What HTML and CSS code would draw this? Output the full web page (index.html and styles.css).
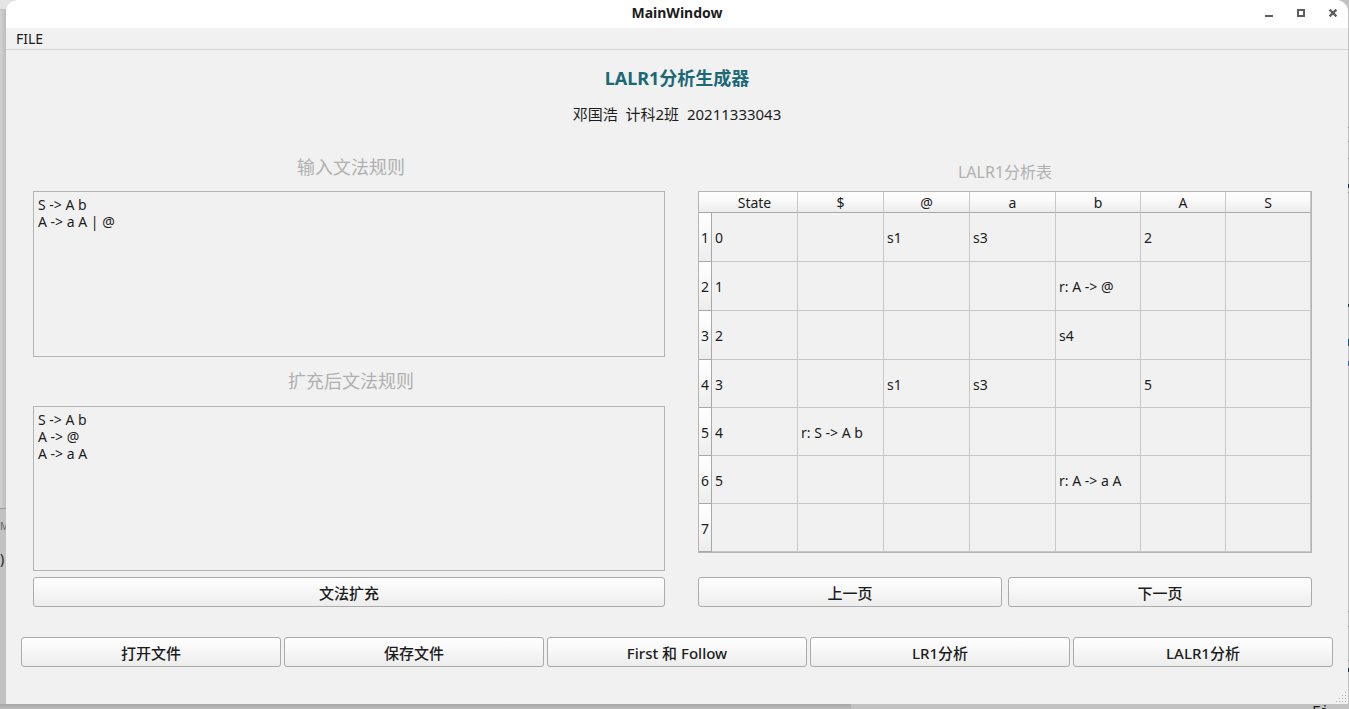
FILE: index.html
```html
<!DOCTYPE html>
<html lang="zh-CN">
<head>
<meta charset="utf-8">
<title>MainWindow</title>
<link rel="stylesheet" href="styles.css">
</head>
<body>
<div class="backdrop" aria-hidden="true">
  <div class="strip strip-left-top"></div>
  <div class="strip strip-left"></div>
  <div class="strip strip-bottom"></div>
  <span class="peek peek-m">M</span>
  <span class="peek peek-paren">)</span>
  <span class="peek peek-fi">Fi</span>
  <svg class="edge" width="1" height="709" viewBox="0 0 1 709" shape-rendering="crispEdges">
    <path d="M0 184h1v4h-1zM0 304h1v3h-1zM0 668h1v4h-1z" fill="#2b3140"/>
    <path d="M0 339h1v7h-1z" fill="#14586a"/>
    <path d="M0 361h1v5h-1z" fill="#3a66a5"/>
    <path d="M0 127h1v1h-1zM0 141h1v1h-1zM0 158h1v1h-1zM0 192h1v1h-1zM0 611h1v1h-1zM0 626h1v1h-1zM0 660h1v1h-1z" fill="#858585"/>
  </svg>
</div>
<div class="window">
  <header class="titlebar">
    <h1 class="window-title">MainWindow</h1>
    <div class="window-controls">
      <button class="window-button" aria-label="Minimize"><svg width="10" height="10" viewBox="0 0 10 10" shape-rendering="crispEdges"><path d="M1 7h8v2H1z" fill="#5e5e5e"/></svg></button>
      <button class="window-button" aria-label="Maximize"><svg width="10" height="10" viewBox="0 0 10 10" shape-rendering="crispEdges"><path d="M2 2h6v6H2z" fill="none" stroke="#5e5e5e" stroke-width="2"/></svg></button>
      <button class="window-button" aria-label="Close"><svg width="10" height="10" viewBox="0 0 10 10"><path d="M1.6 1.6l6.8 6.8M8.4 1.6L1.6 8.4" fill="none" stroke="#5e5e5e" stroke-width="2.2"/></svg></button>
    </div>
  </header>
  <nav class="menubar"><button class="menu">FILE</button></nav>
  <main class="content">
    <h2 class="heading">LALR1分析生成器</h2>
    <p class="author">邓国浩&nbsp; 计科2班&nbsp; 20211333043</p>
    <div class="panels">
      <section class="panel">
        <label class="label label-editor" for="grammar">输入文法规则</label>
        <textarea class="editor" id="grammar" spellcheck="false">S -&gt; A b
A -&gt; a A | @</textarea>
        <label class="label label-editor" for="augmented">扩充后文法规则</label>
        <textarea class="editor" id="augmented" spellcheck="false">S -&gt; A b
A -&gt; @
A -&gt; a A</textarea>
        <div class="panel-actions"><button class="button">文法扩充</button></div>
      </section>
      <section class="panel">
        <h3 class="label label-table" id="table-label">LALR1分析表</h3>
        <table class="parse-table" aria-labelledby="table-label">
          <colgroup><col class="col-index"><col class="col-wide" span="4"><col span="3"></colgroup>
          <thead>
            <tr><th class="corner"></th><th>State</th><th>$</th><th>@</th><th>a</th><th>b</th><th>A</th><th>S</th></tr>
          </thead>
          <tbody>
            <tr><th>1</th><td>0</td><td></td><td>s1</td><td>s3</td><td></td><td>2</td><td></td></tr>
            <tr><th>2</th><td>1</td><td></td><td></td><td></td><td>r: A -&gt; @</td><td></td><td></td></tr>
            <tr><th>3</th><td>2</td><td></td><td></td><td></td><td>s4</td><td></td><td></td></tr>
            <tr><th>4</th><td>3</td><td></td><td>s1</td><td>s3</td><td></td><td>5</td><td></td></tr>
            <tr><th>5</th><td>4</td><td>r: S -&gt; A b</td><td></td><td></td><td></td><td></td><td></td></tr>
            <tr><th>6</th><td>5</td><td></td><td></td><td></td><td>r: A -&gt; a A</td><td></td><td></td></tr>
            <tr><th>7</th><td></td><td></td><td></td><td></td><td></td><td></td><td></td></tr>
          </tbody>
        </table>
        <div class="panel-actions"><button class="button">上一页</button><button class="button">下一页</button></div>
      </section>
    </div>
    <div class="toolbar">
      <button class="button">打开文件</button>
      <button class="button">保存文件</button>
      <button class="button">First 和 Follow</button>
      <button class="button">LR1分析</button>
      <button class="button">LALR1分析</button>
    </div>
  </main>
  <svg class="grip" width="12" height="12" viewBox="0 0 12 12" shape-rendering="crispEdges" aria-hidden="true">
    <path d="M10 0h1v1h-1zM7 3h1v1h-1zM10 3h1v1h-1zM4 6h1v1h-1zM7 6h1v1h-1zM10 6h1v1h-1zM1 9h1v1h-1zM4 9h1v1h-1zM7 9h1v1h-1zM10 9h1v1h-1z" fill="#b0b0b0"/>
  </svg>
</div>
</body>
</html>
```
FILE: styles.css
```css
* {
  box-sizing: border-box;
}

body {
  margin: 0;
  min-height: 100vh;
  display: flex;
  position: relative;
  overflow: hidden;
  background: #c2c2c2;
  color: #1c1c1c;
  font-family: "Noto Sans", "Noto Sans CJK SC", sans-serif;
  font-size: 14px;
}

button,
textarea {
  font: inherit;
  color: inherit;
}

/* Desktop visible around the window */
.backdrop {
  position: absolute;
  inset: 0;
}

.strip {
  position: absolute;
  left: 0;
}

.strip-left-top {
  top: 0;
  width: 14px;
  height: 10px;
  background: #e4e4e4;
  border-bottom: 1px solid #c4c4c4;
}

.strip-left {
  top: 10px;
  width: 6px;
  height: 499px;
  background: linear-gradient(90deg, #d2d2d2, #bcbcbc);
  border-bottom: 1px solid #999;
}

.strip-bottom {
  bottom: 0;
  width: 851px;
  height: 5px;
  background: linear-gradient(#a6a6a6, #bcbcbc);
}

.peek {
  position: absolute;
  line-height: 16px;
}

.peek-m {
  left: 0;
  top: 518px;
  font-size: 10px;
  color: #666;
}

.peek-paren {
  left: 0;
  top: 551px;
}

.peek-fi {
  right: 20px;
  bottom: -11px;
  font-family: "Liberation Mono", monospace;
}

.edge {
  position: absolute;
  top: 0;
  right: 0;
}

/* Window frame */
.window {
  position: relative;
  flex: 1;
  display: flex;
  flex-direction: column;
  margin: 0 1px 5px 6px;
  background: #f1f1f1;
  border-radius: 12px 12px 0 0;
}

.titlebar {
  display: grid;
  grid-template-columns: 1fr auto 1fr;
  align-items: center;
  height: 28px;
  padding-bottom: 2px;
  background: #fff;
  border-radius: 12px 12px 0 0;
}

.window-title {
  grid-column: 2;
  margin: 0;
  padding-bottom: 2px;
  font-size: 14px;
  font-weight: 700;
}

.window-controls {
  display: flex;
  justify-content: flex-end;
  gap: 12px;
  padding-right: 5px;
}

.window-button {
  display: flex;
  align-items: center;
  justify-content: center;
  width: 20px;
  height: 20px;
  padding: 0;
  border: 0;
  background: none;
}

.menubar {
  display: flex;
  height: 22px;
  padding: 0 10px;
  border-bottom: 1px solid #d4d4d4;
}

.menu {
  padding: 0;
  border: 0;
  background: none;
  line-height: 20px;
}

/* Content */
.content {
  flex: 1;
  display: flex;
  flex-direction: column;
  padding: 15px 15px 37px;
}

.heading {
  margin: 0;
  color: #1b6877;
  font-size: 18px;
  font-weight: 700;
  line-height: 26px;
  text-align: center;
}

.author {
  margin: 11px 0 29px;
  font-size: 15px;
  line-height: 24px;
  text-align: center;
}

.panels {
  flex: 1;
  display: grid;
  grid-template-columns: 632fr 614fr;
  gap: 33px;
  padding: 0 21px 0 12px;
}

.panel {
  display: flex;
  flex-direction: column;
}

.label {
  margin: 0;
  height: 49px;
  color: #b0b0b0;
  font-size: 18px;
  font-weight: 400;
  line-height: 48px;
  text-align: center;
}

.label-editor {
  padding-left: 4px;
}

.label:first-child {
  height: 36px;
  line-height: 24px;
}

.label-table:first-child {
  font-size: 16px;
  line-height: 34px;
}

.editor {
  flex: 1;
  width: 100%;
  padding: 4px;
  border: 1px solid #b4b4b4;
  background: #f1f1f1;
  line-height: 17px;
  resize: none;
  outline: 0;
}

.panel-actions {
  display: flex;
  gap: 6px;
  margin-top: auto;
  padding-top: 6px;
}

.button {
  flex: 1;
  height: 30px;
  padding: 2px 8px 0;
  border: 1px solid #ababab;
  border-radius: 3px;
  background: linear-gradient(#fefefe, #fafafa 30%, #ededed);
  font-size: 15px;
  font-weight: 500;
  line-height: 26px;
}

.toolbar {
  display: flex;
  gap: 3px;
  margin-top: 30px;
}

/* Parse table */
.parse-table {
  width: 100%;
  table-layout: fixed;
  border: 1px solid #b4b4b4;
  border-collapse: separate;
  border-spacing: 0;
  line-height: 18px;
}

.col-index {
  width: 13px;
}

.col-wide {
  width: 86px;
}

.parse-table th,
.parse-table td {
  padding: 2px 3px 0;
  border-right: 1px solid #c8c8c8;
  border-bottom: 1px solid #c8c8c8;
  font-weight: 400;
  text-align: left;
  white-space: nowrap;
}

.parse-table thead th {
  height: 21px;
  padding: 2px 0 0;
  border-bottom-color: #a8a8a8;
  background: linear-gradient(#fefefe, #fafafa 40%, #ececec);
  text-align: center;
}

.parse-table thead .corner {
  border-right: 0;
}

.parse-table tbody tr {
  height: 48px;
}

.parse-table tbody tr:nth-child(-n+3) {
  height: 49px;
}

.parse-table tbody th {
  padding: 2px 0 0;
  border-color: #a8a8a8;
  background: linear-gradient(#fefefe, #fafafa 40%, #ececec);
  text-align: center;
}

.grip {
  position: absolute;
  right: 1px;
  bottom: 0;
}
```
